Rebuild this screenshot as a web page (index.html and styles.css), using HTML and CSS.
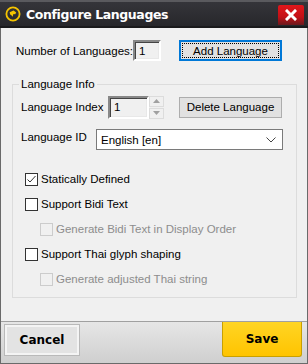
FILE: index.html
```html
<!DOCTYPE html>
<html>
<head>
<meta charset="utf-8">
<link rel="stylesheet" href="styles.css">
</head>
<body>
<div class="window">
  <div class="titlebar">
    <svg class="app-icon" width="16" height="16" viewBox="0 0 16 16">
      <circle cx="8" cy="8" r="6.6" fill="none" stroke="#f5c400" stroke-width="1.8"/>
      <path d="M4.6 6.2 L8.6 4.6 L11.2 6.4 L10.2 8.2 L8.4 8 L7.6 10.8 L6.4 9.2 L5.2 8.6 Z" fill="#f5c400"/>
    </svg>
    <span class="title">Configure Languages</span>
    <div class="close">
      <svg width="12" height="12" viewBox="0 0 12 12"><path d="M2 2 L10 10 M10 2 L2 10" stroke="#fff" stroke-width="3" stroke-linecap="square"/></svg>
    </div>
  </div>
  <div class="content">
    <div class="row-top">
      <span class="label">Number of Languages:</span>
      <div class="sunken num-box">1</div>
      <button class="btn btn-focus"><span class="focus-ring">Add Language</span></button>
    </div>
    <fieldset class="group">
      <legend>Language Info</legend>
      <div class="row-index">
        <span class="label">Language Index</span>
        <div class="spin">
          <div class="sunken spin-box">1</div>
          <div class="spin-arrows">
            <div class="arrow"><svg width="7" height="4" viewBox="0 0 7 4"><path d="M0 4 L3.5 0 L7 4 Z" fill="#a0a0a0"/></svg></div>
            <div class="arrow"><svg width="7" height="4" viewBox="0 0 7 4"><path d="M0 0 L3.5 4 L7 0 Z" fill="#a0a0a0"/></svg></div>
          </div>
        </div>
        <button class="btn">Delete Language</button>
      </div>
      <div class="row-id">
        <span class="label">Language ID</span>
        <div class="combo">
          <span>English [en]</span>
          <svg width="10" height="6" viewBox="0 0 10 6"><path d="M0.5 0.5 L5 5 L9.5 0.5" fill="none" stroke="#444" stroke-width="1"/></svg>
        </div>
      </div>
      <div class="checks">
        <div class="check"><span class="box"><svg width="11" height="11" viewBox="0 0 11 11"><path d="M1.5 5.5 L4 8 L9.5 2" fill="none" stroke="#333" stroke-width="1"/></svg></span>Statically Defined</div>
        <div class="check"><span class="box"></span>Support Bidi Text</div>
        <div class="check sub disabled"><span class="box"></span>Generate Bidi Text in Display Order</div>
        <div class="check"><span class="box"></span>Support Thai glyph shaping</div>
        <div class="check sub disabled"><span class="box"></span>Generate adjusted Thai string</div>
      </div>
    </fieldset>
  </div>
  <div class="footer">
    <button class="fbtn cancel">Cancel</button>
    <button class="fbtn save">Save</button>
  </div>
</div>
</body>
</html>
```

FILE: styles.css
```css
html, body {
  margin: 0;
  padding: 0;
  background: #f0f0f0;
}
.window {
  width: 308px;
  height: 364px;
  box-sizing: border-box;
  border: 1px solid #6a6a6a;
  border-top: none;
  display: flex;
  flex-direction: column;
  font-family: "Liberation Sans", Arial, sans-serif;
  font-size: 11.5px;
  color: #000;
  background: #f0f0f0;
  white-space: nowrap;
}
.titlebar {
  height: 28px;
  box-sizing: border-box;
  margin: 0 -1px;
  border-top: 2px solid #5a5a5e;
  border-bottom: 2px solid #1a1a1c;
  background: linear-gradient(#35353a, #27272b);
  display: flex;
  align-items: center;
  padding-left: 5px;
  flex-shrink: 0;
}
.app-icon {
  margin-right: 5px;
}
.title {
  color: #fff;
  font-family: "DejaVu Sans", sans-serif;
  font-weight: bold;
  font-size: 12.5px;
  letter-spacing: -0.4px;
  flex: 1;
}
.close {
  width: 26px;
  height: 20px;
  margin-right: 4px;
  margin-top: 1px;
  background: linear-gradient(#e0161b, #c41016 60%, #6a1a1e);
  border-radius: 2px 2px 0 0;
  display: flex;
  align-items: center;
  justify-content: center;
}
.content {
  flex: 1;
  padding: 12px 10px 0 11px;
}
.row-top {
  display: flex;
  align-items: center;
  height: 21px;
  padding-left: 4px;
}
.row-top .label {
  width: 117px;
}
.sunken {
  box-sizing: border-box;
  border: 2px solid;
  border-color: #888 #fff #fff #888;
  box-shadow: inset 1px 1px 0 #444, inset -1px -1px 0 #e8e8e8;
  background: #f0f0f0;
  padding-left: 4px;
  display: flex;
  align-items: center;
}
.num-box {
  width: 28px;
  height: 21px;
  margin-right: 18px;
}
.btn {
  width: 103px;
  height: 21px;
  box-sizing: border-box;
  border: 1px solid #adadad;
  background: #e1e1e1;
  font-family: "Liberation Sans", Arial, sans-serif;
  font-size: 11.5px;
  color: #000;
  padding: 0;
  display: flex;
  align-items: center;
  justify-content: center;
}
.btn-focus {
  border: 2px solid #0078d7;
  padding: 1px;
}
.focus-ring {
  flex: 1;
  align-self: stretch;
  display: flex;
  align-items: center;
  justify-content: center;
  outline: 1px dotted #000;
  outline-offset: -1px;
}
.group {
  margin: 16px 0 0 0;
  padding: 0 8px 0 6px;
  border: 1px solid #dcdcdc;
  height: 221px;
  box-sizing: border-box;
}
.group legend {
  padding: 0 2px;
  font-size: 11.5px;
  line-height: 15px;
}
.row-index {
  display: flex;
  align-items: center;
  margin: 3px 0 0 2px;
  height: 24px;
}
.row-index .label {
  width: 87px;
}
.spin {
  display: flex;
  height: 23px;
  margin-right: 15px;
}
.spin-box {
  width: 41px;
  height: 23px;
}
.spin-arrows {
  width: 15px;
  display: flex;
  flex-direction: column;
  gap: 1px;
}
.arrow {
  flex: 1;
  background: #f0f0f0;
  border: 1px solid #dcdcdc;
  display: flex;
  align-items: center;
  justify-content: center;
}
.row-id {
  display: flex;
  align-items: center;
  margin: 10px 0 0 2px;
  height: 21px;
}
.row-id .label {
  width: 75px;
  margin-top: -5px;
}
.combo {
  width: 187px;
  height: 21px;
  box-sizing: border-box;
  border: 1px solid #7a7a7a;
  background: #fff;
  display: flex;
  align-items: center;
  justify-content: space-between;
  padding: 0 6px 0 4px;
}
.checks {
  margin-top: 22px;
  margin-left: 6px;
  display: flex;
  flex-direction: column;
  gap: 11px;
}
.check {
  display: flex;
  align-items: center;
  height: 14px;
}
.box {
  width: 13px;
  height: 13px;
  box-sizing: border-box;
  border: 1px solid #333;
  background: #fff;
  margin-right: 3px;
  display: flex;
  align-items: center;
  justify-content: center;
}
.sub {
  margin-left: 15px;
}
.disabled {
  color: #8d8d8d;
}
.disabled .box {
  border-color: #cccccc;
  background: #f0f0f0;
}
.footer {
  height: 42px;
  flex-shrink: 0;
  box-sizing: border-box;
  border-top: 1px solid #a0a0a0;
  background: linear-gradient(#e6e6e6, #cfcfcf);
  display: flex;
  justify-content: space-between;
  align-items: flex-start;
  padding: 0 5px 0 4px;
}
.fbtn {
  font-family: "DejaVu Sans", sans-serif;
  font-weight: bold;
  font-size: 12px;
  color: #000;
  padding: 0;
  box-sizing: border-box;
}
.cancel {
  margin-top: 3px;
  width: 74px;
  height: 30px;
  border: 2px solid #f4f4f4;
  outline: 1px solid #b9b9b9;
  background: #e3e3e3;
}
.save {
  width: 80px;
  height: 35px;
  border: 1px solid #c9a000;
  border-top: none;
  border-radius: 0 0 3px 3px;
  background: linear-gradient(#ffd524, #ffc400);
}
```
